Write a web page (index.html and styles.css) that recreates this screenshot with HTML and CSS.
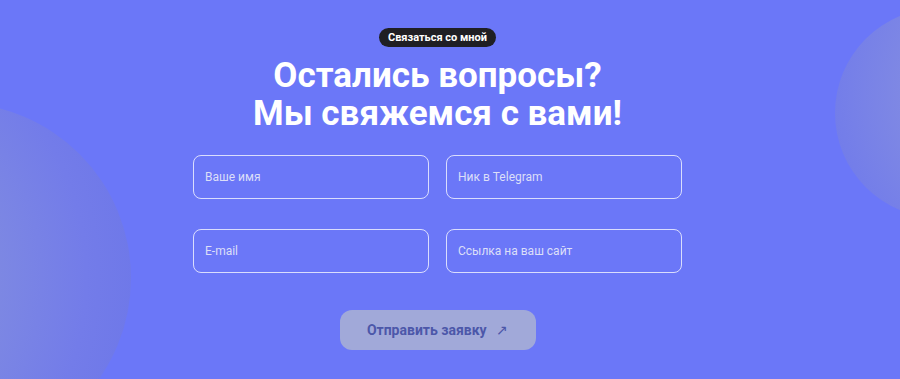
FILE: index.html
```html
<!DOCTYPE html>
<html lang="ru">
<head>
    <meta charset="UTF-8">
    <meta name="viewport" content="width=device-width, initial-scale=1.0">
    <title>Связаться со мной</title>
    <link rel="stylesheet" href="styles.css">
</head>
<body>
    <section class="contact">
        <div class="ball ball-left"></div>
        <div class="ball ball-right"></div>

        <div class="container">
            <span class="badge">Связаться со мной</span>
            <h1>Остались вопросы?<br>Мы свяжемся с вами!</h1>

            <form class="form" onsubmit="return false">
                <div class="fields">
                    <input type="text" placeholder="Ваше имя">
                    <input type="text" placeholder="Ник в Telegram">
                    <input type="email" placeholder="E-mail">
                    <input type="text" placeholder="Ссылка на ваш сайт">
                </div>
                <button type="submit" class="send">Отправить заявку <span class="arrow">↗</span></button>
            </form>
        </div>
    </section>
</body>
</html>
```

FILE: styles.css
```css
* {
    margin: 0;
    padding: 0;
    box-sizing: border-box;
    font-family: Roboto, "Liberation Sans", Arial, sans-serif;
}

body {
    background: #6b77f8;
    overflow: hidden;
}

.contact {
    position: relative;
    height: 379px;
    padding-top: 28px;
    overflow: hidden;
}

/* декоративные шары */
.ball {
    position: absolute;
    border-radius: 50%;
}

.ball-left {
    width: 350px;
    height: 350px;
    left: -219px;
    top: 103px;
    background: radial-gradient(circle at 10% 50%, #939cd4 0%, #838fdf 35%, #737ce9 75%, #6b75e8 100%);
}

.ball-right {
    width: 210px;
    height: 210px;
    left: 835px;
    top: 8px;
    background: radial-gradient(circle at 85% 40%, #9aa0d8 0%, #838ce2 40%, #747ee9 80%, #6e78ea 100%);
}

.container {
    position: relative;
    width: 875px;
    display: flex;
    flex-direction: column;
    align-items: center;
}

.badge {
    display: inline-block;
    background: #1f1f24;
    color: #fff;
    font-size: 11px;
    font-weight: 700;
    line-height: 19px;
    padding: 0 9px;
    border-radius: 10px;
}

h1 {
    margin-top: 10px;
    color: #fff;
    font-size: 35px;
    font-weight: 700;
    line-height: 38px;
    text-align: center;
}

.form {
    margin-top: 22px;
    display: flex;
    flex-direction: column;
    align-items: center;
}

.fields {
    display: grid;
    grid-template-columns: 236px 236px;
    column-gap: 17px;
    row-gap: 30px;
}

.fields input {
    height: 44px;
    padding: 0 11px;
    background: transparent;
    border: 1px solid rgba(255, 255, 255, 0.75);
    border-radius: 8px;
    color: #fff;
    font-size: 12px;
    outline: none;
}

.fields input::placeholder {
    color: #dcdff8;
}

.send {
    margin-top: 37px;
    width: 196px;
    height: 40px;
    border: none;
    border-radius: 12px;
    background: #a1a9d9;
    color: #4c57a9;
    font-size: 14px;
    font-weight: 700;
    cursor: pointer;
}

.send .arrow {
    margin-left: 6px;
    font-weight: 400;
}
```
